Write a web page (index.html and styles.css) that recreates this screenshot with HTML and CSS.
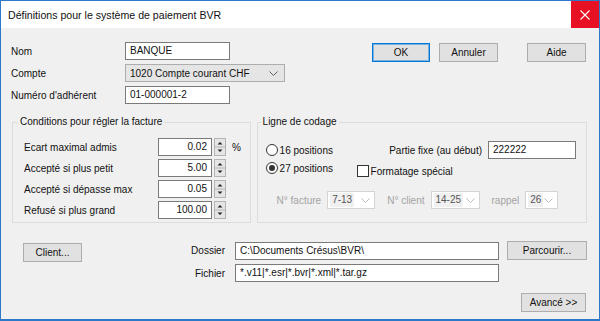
FILE: index.html
```html
<!DOCTYPE html>
<html lang="fr">
<head>
    <meta charset="UTF-8">
    <title>Définitions pour le système de paiement BVR</title>
    <link rel="stylesheet" href="styles.css">
</head>
<body>
    <div class="window">
        <div class="titlebar">
            <span class="title">Définitions pour le système de paiement BVR</span>
            <span class="close">
                <svg width="10" height="10" viewBox="0 0 10 10"><path d="M0.5 0.5 L9.5 9.5 M9.5 0.5 L0.5 9.5" stroke="#fff" stroke-width="1.1"/></svg>
            </span>
        </div>
        <div class="content">
            <div class="top">
                <div class="form">
                    <span>Nom</span>
                    <div class="field short">BANQUE</div>
                    <span>Compte</span>
                    <div class="combo">
                        <span>1020 Compte courant CHF</span>
                        <svg width="9" height="5" viewBox="0 0 9 5"><path d="M0.5 0.5 L4.5 4.5 L8.5 0.5" fill="none" stroke="#606060"/></svg>
                    </div>
                    <span>Numéro d'adhérent</span>
                    <div class="field short">01-000001-2</div>
                </div>
                <div class="buttons">
                    <button class="btn default">OK</button>
                    <button class="btn cancel">Annuler</button>
                    <button class="btn help">Aide</button>
                </div>
            </div>

            <div class="groups">
                <fieldset class="group conditions">
                    <legend>Conditions pour régler la facture</legend>
                    <div class="spin-row">
                        <span class="spin-label">Ecart maximal admis</span>
                        <div class="field num">0.02</div>
                        <svg class="spinner" width="12" height="18" viewBox="0 0 12 18"><rect x="0.5" y="0.5" width="11" height="17" fill="#e5e5e5" stroke="#b4b4b4"/><path d="M0.5 9 H11.5" stroke="#b4b4b4"/><path d="M3.5 6.5 L6 4 L8.5 6.5 Z" fill="#222"/><path d="M3.5 11.5 L8.5 11.5 L6 14 Z" fill="#222"/></svg>
                        <span class="unit">%</span>
                    </div>
                    <div class="spin-row">
                        <span class="spin-label">Accepté si plus petit</span>
                        <div class="field num">5.00</div>
                        <svg class="spinner" width="12" height="18" viewBox="0 0 12 18"><rect x="0.5" y="0.5" width="11" height="17" fill="#e5e5e5" stroke="#b4b4b4"/><path d="M0.5 9 H11.5" stroke="#b4b4b4"/><path d="M3.5 6.5 L6 4 L8.5 6.5 Z" fill="#222"/><path d="M3.5 11.5 L8.5 11.5 L6 14 Z" fill="#222"/></svg>
                    </div>
                    <div class="spin-row">
                        <span class="spin-label">Accepté si dépasse max</span>
                        <div class="field num">0.05</div>
                        <svg class="spinner" width="12" height="18" viewBox="0 0 12 18"><rect x="0.5" y="0.5" width="11" height="17" fill="#e5e5e5" stroke="#b4b4b4"/><path d="M0.5 9 H11.5" stroke="#b4b4b4"/><path d="M3.5 6.5 L6 4 L8.5 6.5 Z" fill="#222"/><path d="M3.5 11.5 L8.5 11.5 L6 14 Z" fill="#222"/></svg>
                    </div>
                    <div class="spin-row">
                        <span class="spin-label">Refusé si plus grand</span>
                        <div class="field num">100.00</div>
                        <svg class="spinner" width="12" height="18" viewBox="0 0 12 18"><rect x="0.5" y="0.5" width="11" height="17" fill="#e5e5e5" stroke="#b4b4b4"/><path d="M0.5 9 H11.5" stroke="#b4b4b4"/><path d="M3.5 6.5 L6 4 L8.5 6.5 Z" fill="#222"/><path d="M3.5 11.5 L8.5 11.5 L6 14 Z" fill="#222"/></svg>
                    </div>
                </fieldset>

                <fieldset class="group codage">
                    <legend>Ligne de codage</legend>
                    <div class="codage-grid">
                        <div class="option"><span class="radio"></span>16 positions</div>
                        <div class="fixed">
                            <span>Partie fixe (au début)</span>
                            <div class="field fixed-value">222222</div>
                        </div>
                        <div class="option"><span class="radio on"></span>27 positions</div>
                        <div class="check"><span class="checkbox"></span>Formatage spécial</div>
                    </div>
                    <div class="disabled-row">
                        <span class="dis-label">N° facture</span>
                        <div class="dis-select w48"><span class="val">7-13</span><svg width="9" height="5" viewBox="0 0 9 5"><path d="M0.5 0.5 L4.5 4.5 L8.5 0.5" fill="none" stroke="#bdbdbd"/></svg></div>
                        <span class="dis-label">N° client</span>
                        <div class="dis-select w49"><span class="val">14-25</span><svg width="9" height="5" viewBox="0 0 9 5"><path d="M0.5 0.5 L4.5 4.5 L8.5 0.5" fill="none" stroke="#bdbdbd"/></svg></div>
                        <span class="dis-label">rappel</span>
                        <div class="dis-select w33"><span class="val">26</span><svg width="9" height="5" viewBox="0 0 9 5"><path d="M0.5 0.5 L4.5 4.5 L8.5 0.5" fill="none" stroke="#bdbdbd"/></svg></div>
                    </div>
                </fieldset>
            </div>

            <div class="files">
                <button class="btn client">Client...</button>
                <span class="file-label">Dossier</span>
                <div class="field path first">C:\Documents Crésus\BVR\</div>
                <button class="btn browse">Parcourir...</button>
                <span></span>
                <span class="file-label">Fichier</span>
                <div class="field path">*.v11|*.esr|*.bvr|*.xml|*.tar.gz</div>
            </div>

            <div class="footer">
                <button class="btn advanced">Avancé &gt;&gt;</button>
            </div>
        </div>
    </div>
</body>
</html>
```

FILE: styles.css
```css
html, body {
    margin: 0;
}

body {
    font-family: "Liberation Sans", Arial, sans-serif;
    font-size: 10px;
    color: #111;
    background: #fff;
}

.window {
    width: 600px;
    height: 321px;
    box-sizing: border-box;
    border: 1px solid #2b79c8;
    border-bottom-width: 2px;
    background: #f0f0f0;
    display: flex;
    flex-direction: column;
}

.titlebar {
    height: 27px;
    background: #fff;
    display: flex;
    align-items: center;
    flex-shrink: 0;
}
.title {
    flex: 1;
    padding-left: 7px;
    font-size: 10.6px;
}
.close {
    width: 28px;
    height: 27px;
    background: #e81123;
    display: flex;
    align-items: center;
    justify-content: center;
}

.content {
    padding: 14px 12px 0 10px;
}

/* generic controls */
.field {
    height: 18px;
    box-sizing: border-box;
    border: 1px solid #7a7a7a;
    background: #fff;
    padding: 0 4px;
    line-height: 16px;
    white-space: nowrap;
    overflow: hidden;
}
.btn {
    width: 59px;
    height: 19px;
    box-sizing: border-box;
    border: 1px solid #adadad;
    background: #e1e1e1;
    font: inherit;
    color: #111;
    padding: 0;
    line-height: 17px;
    text-align: center;
}

/* top part */
.top {
    display: flex;
}
.form {
    display: grid;
    grid-template-columns: 114px auto;
    grid-auto-rows: 18px;
    row-gap: 4px;
    align-items: center;
}
.short {
    width: 105px;
}
.combo {
    width: 160px;
    height: 18px;
    box-sizing: border-box;
    border: 1px solid #adadad;
    background: #e5e5e5;
    display: flex;
    align-items: center;
    justify-content: space-between;
    padding: 0 6px 0 4px;
}
.buttons {
    display: flex;
    margin-left: auto;
    margin-right: 1px;
    margin-top: 1px;
    align-self: flex-start;
}
.btn.default {
    width: 58px;
    border-color: #0078d7;
    box-shadow: inset 0 0 0 1px rgba(0, 120, 215, 0.45);
}
.btn.cancel {
    margin-left: 9px;
}
.btn.help {
    margin-left: 29px;
}

/* group boxes */
.groups {
    display: flex;
    gap: 6px;
    margin: 12px 0 0 1px;
}
.group {
    margin: 0;
    min-width: 0;
    box-sizing: border-box;
    border: 1px solid #dcdcdc;
}
.group legend {
    padding: 0 2px;
    line-height: 12px;
}
.conditions {
    width: 239px;
    padding: 10px 0 3px 11px;
}
.conditions legend {
    margin-left: -6px;
}
.codage {
    width: 331px;
    padding: 13px 10px 0 8px;
}
.codage legend {
    margin-left: -5px;
}

.spin-row {
    display: flex;
    align-items: center;
    height: 18px;
}
.spin-row + .spin-row {
    margin-top: 3px;
}
.spin-label {
    width: 134px;
}
.num {
    width: 54px;
    text-align: right;
}
.spinner {
    margin-left: 2px;
    display: block;
}
.unit {
    margin-left: 6px;
}

.codage-grid {
    display: grid;
    grid-template-columns: 91px 1fr;
    grid-auto-rows: 18px;
}
.option {
    display: flex;
    align-items: center;
}
.radio {
    width: 12px;
    height: 12px;
    box-sizing: border-box;
    border: 1px solid #333;
    border-radius: 50%;
    background: #fff;
    margin-right: 2px;
}
.radio.on::after {
    content: "";
    display: block;
    width: 6px;
    height: 6px;
    margin: 2px;
    border-radius: 50%;
    background: #333;
}
.fixed {
    display: flex;
    align-items: center;
    justify-content: flex-end;
    gap: 6px;
}
.fixed-value {
    width: 88px;
}
.check {
    display: flex;
    align-items: center;
    align-self: end;
}
.checkbox {
    width: 12px;
    height: 12px;
    box-sizing: border-box;
    border: 1px solid #333;
    background: #fff;
    margin-right: 2px;
}

.disabled-row {
    display: flex;
    align-items: center;
    height: 18px;
    margin-top: 14px;
    padding-left: 11px;
}
.dis-label {
    color: #a3a3a3;
    margin-right: 6px;
}
.dis-select {
    height: 18px;
    box-sizing: border-box;
    border: 1px solid #d4d4d4;
    background: #fff;
    color: #555;
    display: flex;
    align-items: center;
    justify-content: space-between;
    padding: 0 4px 0 2px;
    margin-right: 12px;
}
.dis-select .val {
    background: #f0f0f0;
    padding: 0 2px;
    line-height: 14px;
}
.w48 { width: 48px; }
.w49 { width: 49px; }
.w33 { width: 33px; }

/* files */
.files {
    display: grid;
    grid-template-columns: 71px 153px 264px 88px;
    grid-template-rows: 19px 18px;
    row-gap: 4px;
    margin-top: 18px;
    align-items: start;
}
.btn.client {
    margin: 2px 0 0 12px;
}
.file-label {
    justify-self: end;
    align-self: center;
    padding-right: 10px;
}
.path {
    width: 264px;
}
.path.first {
    margin-top: 1px;
}
.btn.browse {
    width: 80px;
    margin-left: 8px;
}

.footer {
    display: flex;
    justify-content: flex-end;
    margin: 11px 1px 0 0;
}
.btn.advanced {
    width: 65px;
}
```
